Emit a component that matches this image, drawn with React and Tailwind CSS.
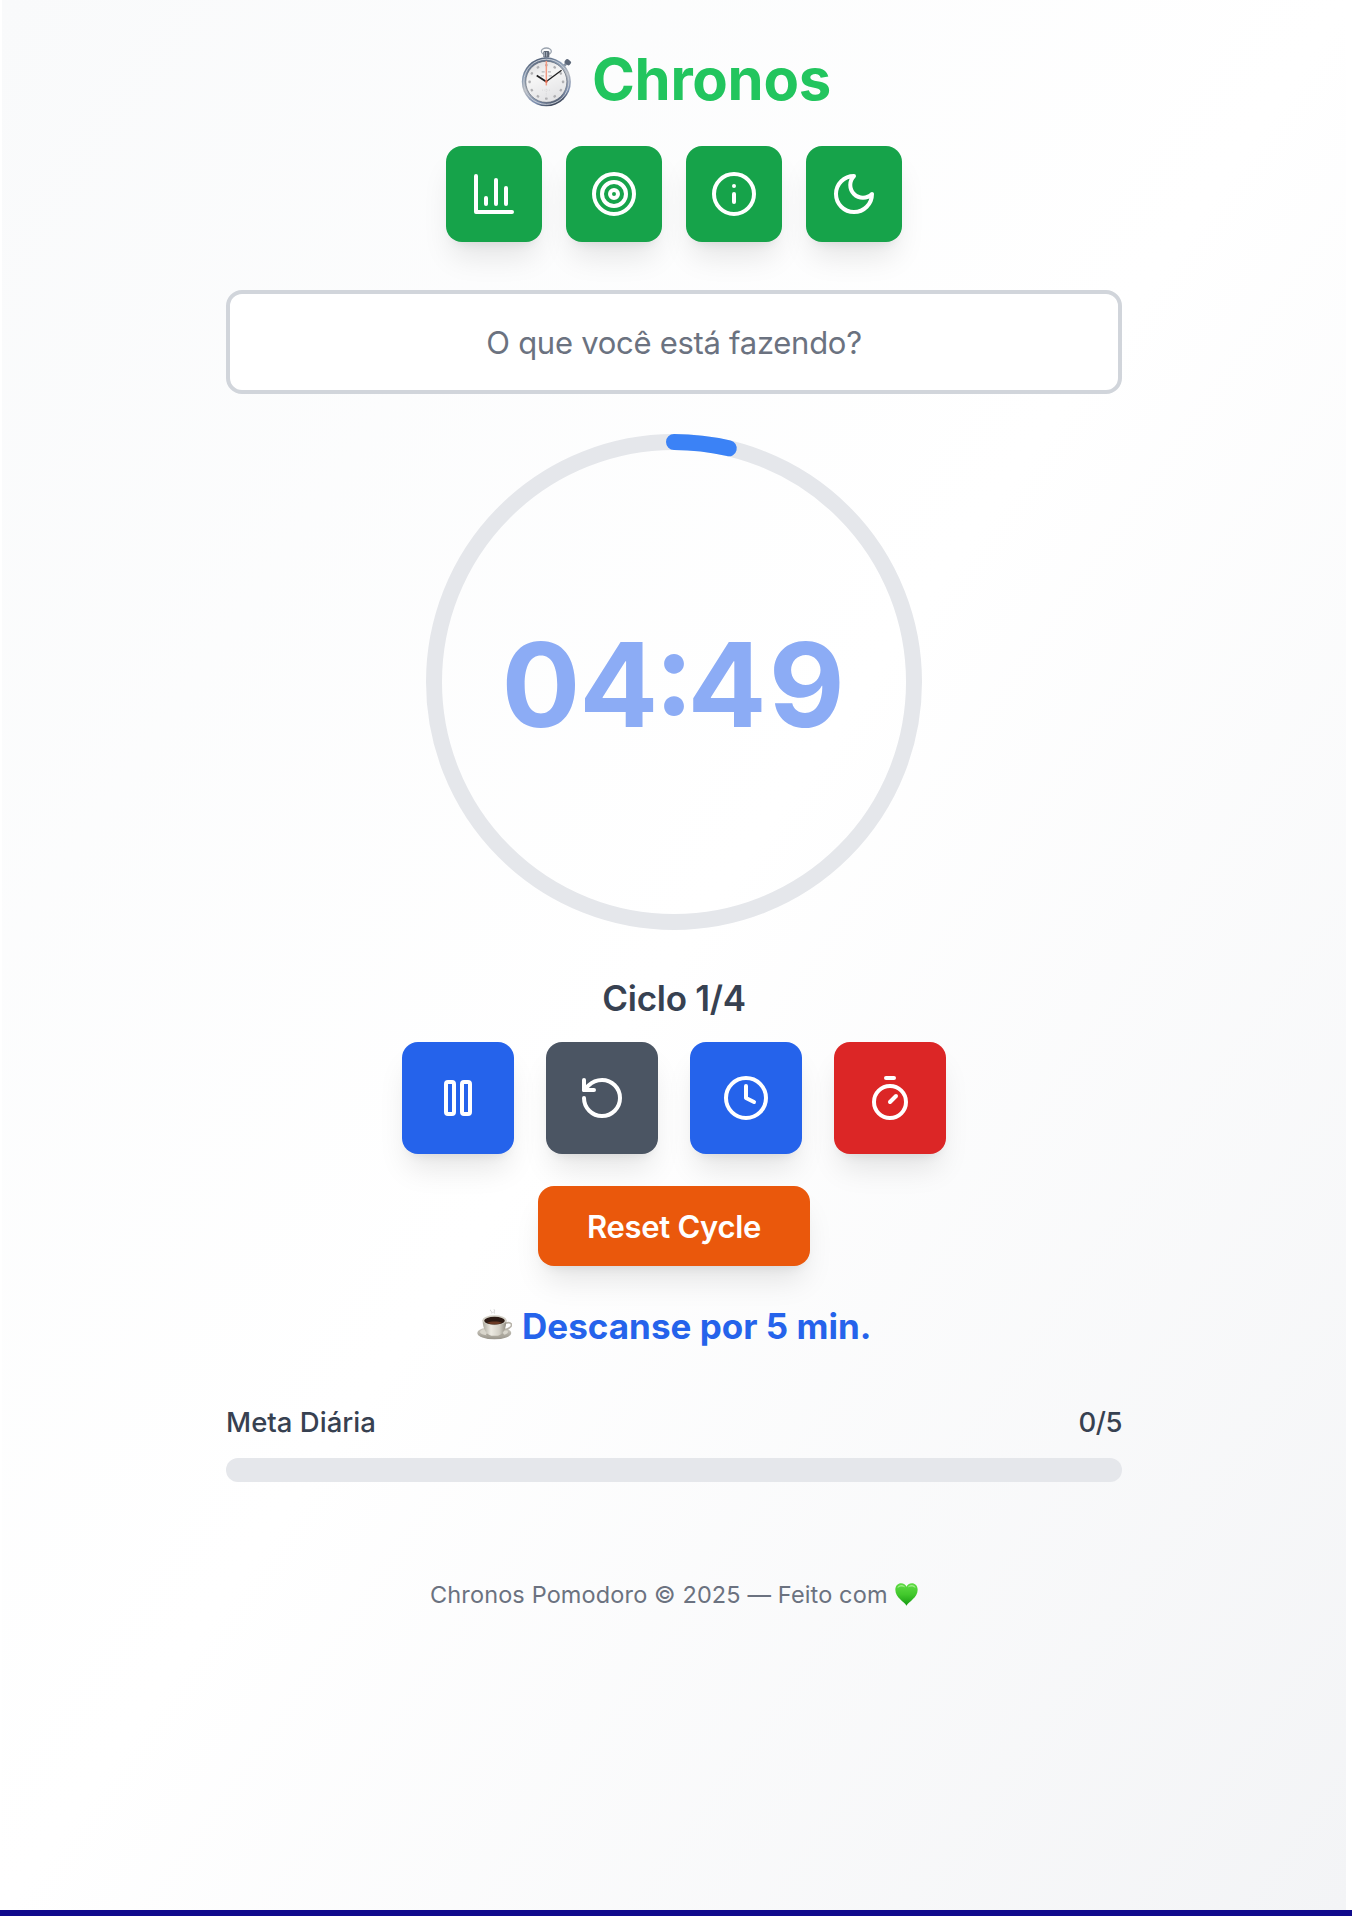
import React from "react";

function Icon({ children }) {
  return (
    <svg
      viewBox="0 0 24 24"
      className="h-12 w-12"
      fill="none"
      stroke="currentColor"
      strokeWidth="2"
      strokeLinecap="round"
      strokeLinejoin="round"
    >
      {children}
    </svg>
  );
}

const ChartIcon = () => (
  <Icon>
    <path d="M3 3v18h18" />
    <path d="M18 17V9" />
    <path d="M13 17V5" />
    <path d="M8 17v-3" />
  </Icon>
);

const TargetIcon = () => (
  <Icon>
    <circle cx="12" cy="12" r="10" />
    <circle cx="12" cy="12" r="6" />
    <circle cx="12" cy="12" r="2" />
  </Icon>
);

const InfoIcon = () => (
  <Icon>
    <circle cx="12" cy="12" r="10" />
    <path d="M12 16v-4" />
    <path d="M12 8h.01" />
  </Icon>
);

const MoonIcon = () => (
  <Icon>
    <path d="M12 3a6 6 0 0 0 9 9 9 9 0 1 1-9-9Z" />
  </Icon>
);

const PauseIcon = () => (
  <Icon>
    <rect x="6" y="4" width="4" height="16" rx="1" />
    <rect x="14" y="4" width="4" height="16" rx="1" />
  </Icon>
);

const RestartIcon = () => (
  <Icon>
    <path d="M3 12a9 9 0 1 0 9-9 9.75 9.75 0 0 0-6.74 2.74L3 8" />
    <path d="M3 3v5h5" />
  </Icon>
);

const ClockIcon = () => (
  <Icon>
    <circle cx="12" cy="12" r="10" />
    <path d="M12 6v6l4 2" />
  </Icon>
);

const TimerIcon = () => (
  <Icon>
    <path d="M10 2h4" />
    <path d="M12 14l3-3" />
    <circle cx="12" cy="14" r="8" />
  </Icon>
);

function Stopwatch() {
  const ticks = Array.from({ length: 12 }, (_, i) => i * 30);
  return (
    <svg viewBox="0 0 156 184" className="mb-[3px] h-[61px] w-[52px] shrink-0">
      <defs>
        <linearGradient id="watchRim" x1="0.3" y1="0" x2="0.7" y2="1">
          <stop offset="0" stopColor="#4d5a70" />
          <stop offset="0.25" stopColor="#8497b0" />
          <stop offset="0.5" stopColor="#b9bcc2" />
          <stop offset="0.8" stopColor="#7c8fb0" />
          <stop offset="1" stopColor="#2e3442" />
        </linearGradient>
        <linearGradient id="watchFace" x1="0" y1="0" x2="0.4" y2="1">
          <stop offset="0" stopColor="#d9d9db" />
          <stop offset="0.45" stopColor="#f6f6f6" />
          <stop offset="1" stopColor="#e4e4e6" />
        </linearGradient>
      </defs>
      <ellipse cx="79" cy="13" rx="15" ry="10" fill="none" stroke="#9aa3ae" strokeWidth="4" />
      <rect x="70" y="12" width="18" height="20" rx="4" fill="#5c6573" />
      <path d="M73 15v14M80 15v14" stroke="#aab3bf" strokeWidth="3" />
      <path d="M130 59l12-12" stroke="#8691a0" strokeWidth="8" />
      <rect x="134" y="38" width="19" height="15" rx="5" fill="#5d6879" transform="rotate(38 143 46)" />
      <circle cx="79" cy="105" r="74" fill="url(#watchRim)" />
      <circle cx="79" cy="105" r="68" fill="none" stroke="#c9ced6" strokeWidth="3" />
      <circle cx="79" cy="105" r="62" fill="url(#watchFace)" stroke="#5a6271" strokeWidth="2" />
      {ticks.map((a) => (
        <rect key={a} x="75" y="51" width="8" height="7" rx="2" fill="#b0b0b3" transform={`rotate(${a} 79 105)`} />
      ))}
      <path d="M65 75h9M84 75h9M62 87h10M86 87h10" stroke="#b8b8bb" strokeWidth="4" />
      <path d="M79 126v22M66 130h26" stroke="#cfcfd2" strokeWidth="2" strokeDasharray="3 4" />
      <path d="M50 86l28 18" stroke="#1d1d1f" strokeWidth="5.5" />
      <path d="M79 104l46-34" stroke="#1d1d1f" strokeWidth="4" />
      <path d="M79 42v74" stroke="#f39a83" strokeWidth="4.5" />
      <circle cx="79" cy="104" r="4" fill="#d8664e" />
    </svg>
  );
}

function Coffee() {
  return (
    <svg viewBox="0 0 108 96" className="mb-1 h-8 w-9 shrink-0">
      <defs>
        <linearGradient id="cupBody" x1="0" y1="0" x2="1" y2="0">
          <stop offset="0" stopColor="#aaa79c" />
          <stop offset="0.35" stopColor="#edebe3" />
          <stop offset="0.7" stopColor="#d4d1c7" />
          <stop offset="1" stopColor="#8f8b80" />
        </linearGradient>
        <linearGradient id="saucer" x1="0" y1="0" x2="0" y2="1">
          <stop offset="0" stopColor="#d5d2c9" />
          <stop offset="1" stopColor="#99958b" />
        </linearGradient>
      </defs>
      <path d="M45 5c-6 4 7 6 2 11M54 4c5 5-4 8 3 13" fill="none" stroke="#cfcfcf" strokeWidth="3" />
      <ellipse cx="55" cy="75" rx="51" ry="19" fill="url(#saucer)" />
      <ellipse cx="54" cy="72" rx="42" ry="12" fill="#d9d6cc" />
      <ellipse cx="57" cy="80" rx="27" ry="8" fill="#aaa69b" />
      <path d="M88 46c18-7 24 6 13 13-6 5-13 7-19 7" fill="none" stroke="#b7b3a9" strokeWidth="5" />
      <path d="M20 37c0 24 10 43 26 46h20c16-3 25-22 25-46z" fill="url(#cupBody)" />
      <ellipse cx="55.5" cy="37" rx="36" ry="15" fill="#d3d0c6" />
      <ellipse cx="55.5" cy="38" rx="31" ry="11.5" fill="#2c1a14" />
      <path d="M34 44c10 6 32 6 43 0-8-5-34-5-43 0z" fill="#6b3a25" />
    </svg>
  );
}

function GreenHeart() {
  return (
    <svg viewBox="0 0 68 68" className="h-[23px] w-[23px] shrink-0">
      <defs>
        <linearGradient id="heartFill" x1="0" y1="0" x2="0" y2="1">
          <stop offset="0" stopColor="#5fdc45" />
          <stop offset="0.5" stopColor="#42c82c" />
          <stop offset="1" stopColor="#169a12" />
        </linearGradient>
      </defs>
      <path
        d="M34 67C27 55 1 43 1 20 1 8 9 1 18 1c8 0 13 4 16 10C37 5 42 1 50 1c9 0 17 7 17 19 0 23-26 35-33 47z"
        fill="url(#heartFill)"
      />
      <path d="M7 15c2-7 7-9 12-9 6 0 9 3 11 7-7-4-16-4-23 2zM38 13c2-4 5-7 11-7s10 2 12 9c-7-6-16-6-23-2z" fill="#b5f3a2" opacity="0.75" />
    </svg>
  );
}

const SHADOW = "shadow-[0_20px_30px_-6px_rgba(0,0,0,0.1),0_8px_12px_-8px_rgba(0,0,0,0.1)]";

function SquareButton({ className, label, children }) {
  return (
    <button
      aria-label={label}
      className={`flex items-center justify-center rounded-2xl text-white ${SHADOW} ${className}`}
    >
      {children}
    </button>
  );
}

const RADIUS = 240;
const CIRCUMFERENCE = 2 * Math.PI * RADIUS;
const PROGRESS = 11 / 300;

function TimerRing() {
  return (
    <div className="mt-8 grid h-[512px] w-[512px] place-items-center">
      <svg viewBox="0 0 512 512" className="col-start-1 row-start-1 h-[512px] w-[512px] -rotate-90" fill="none">
        <circle cx="256" cy="256" r={RADIUS} stroke="#e5e7eb" strokeWidth="16" />
        <circle
          cx="256"
          cy="256"
          r={RADIUS}
          stroke="#3b82f6"
          strokeWidth="16"
          strokeLinecap="round"
          strokeDasharray={CIRCUMFERENCE}
          strokeDashoffset={CIRCUMFERENCE * (1 - PROGRESS)}
        />
      </svg>
      <span className="col-start-1 row-start-1 pt-[5px] pr-[3px] text-[117px] leading-none font-bold tracking-[-1px] text-[#8cacf5]">
        0<span className="tracking-[-4px]">4</span>
        <span className="inline-block -translate-y-3 tracking-[-6px]">:</span>
        <span className="tracking-[2px]">4</span>9
      </span>
    </div>
  );
}

export default function App() {
  return (
    <div className="flex h-[1916px] w-[1352px] flex-col overflow-hidden bg-white font-[Inter,sans-serif] whitespace-nowrap">
      <main className="mr-1.5 ml-0.5 flex h-[1910px] flex-col items-center bg-[linear-gradient(to_bottom_right,#f9fafb,#ffffff,#f3f4f6)] pt-[43px]">
        <header className="flex h-[72px] w-[308px] items-center">
          <Stopwatch />
          <h1 className="ml-5 text-[58px] leading-[72px] font-bold tracking-[-0.3px] text-[#22c55e]">Chronos</h1>
        </header>

        <nav className="mt-[31px] flex gap-6">
          <SquareButton label="Estatísticas" className="h-24 w-24 bg-[#16a34a]"><ChartIcon /></SquareButton>
          <SquareButton label="Meta" className="h-24 w-24 bg-[#16a34a]"><TargetIcon /></SquareButton>
          <SquareButton label="Informações" className="h-24 w-24 bg-[#16a34a]"><InfoIcon /></SquareButton>
          <SquareButton label="Tema" className="h-24 w-24 bg-[#16a34a]"><MoonIcon /></SquareButton>
        </nav>

        <div className="mt-12 flex h-[104px] w-[896px] items-center justify-center rounded-2xl border-4 border-[#d1d5db] bg-white pt-0.5 text-[31px] tracking-[-0.28px] text-[#6b7280]">
          O que você está fazendo?
        </div>

        <TimerRing />

        <p className="mt-9 text-[35px] leading-[48px] font-semibold tracking-[-0.3px] text-[#374151]">Ciclo 1/4</p>

        <div className="mt-5 flex gap-8">
          <SquareButton label="Pausar" className="h-28 w-28 bg-[#2563eb]"><PauseIcon /></SquareButton>
          <SquareButton label="Reiniciar" className="h-28 w-28 bg-[#4b5563]"><RestartIcon /></SquareButton>
          <SquareButton label="Pausa curta" className="h-28 w-28 bg-[#2563eb]"><ClockIcon /></SquareButton>
          <SquareButton label="Foco" className="h-28 w-28 bg-[#dc2626]"><TimerIcon /></SquareButton>
        </div>

        <button className={`mt-8 flex h-20 w-[272px] items-center justify-center rounded-2xl bg-[#ea580c] pt-0.5 text-[31px] font-semibold tracking-[-0.3px] text-white ${SHADOW}`}>
          Reset Cycle
        </button>

        <div className="mt-10 flex h-10 w-[396px] items-center">
          <Coffee />
          <p className="ml-[10px] text-[35px] leading-10 font-bold tracking-[0.02px] text-[#2563eb]">Descanse por 5 min.</p>
        </div>

        <section className="mt-14 w-[896px]">
          <div className="flex justify-between text-[27.5px] leading-10 font-medium text-[#374151]">
            <span className="tracking-[0.03px]">Meta Diária</span>
            <span className="tracking-[-0.5px]">0/5</span>
          </div>
          <div className="mt-4 h-6 rounded-full bg-[#e5e7eb]" />
        </section>

        <footer className="mt-[92px] flex h-10 w-[488px] items-center text-[#6b7280]">
          <span className="pt-0.5 text-[23.5px] leading-10 tracking-[0.13px]">Chronos Pomodoro © 2025 — Feito com</span>
          <span className="ml-[7px]"><GreenHeart /></span>
        </footer>
      </main>
      <div className="h-1.5 bg-[#100a8c]" />
    </div>
  );
}
